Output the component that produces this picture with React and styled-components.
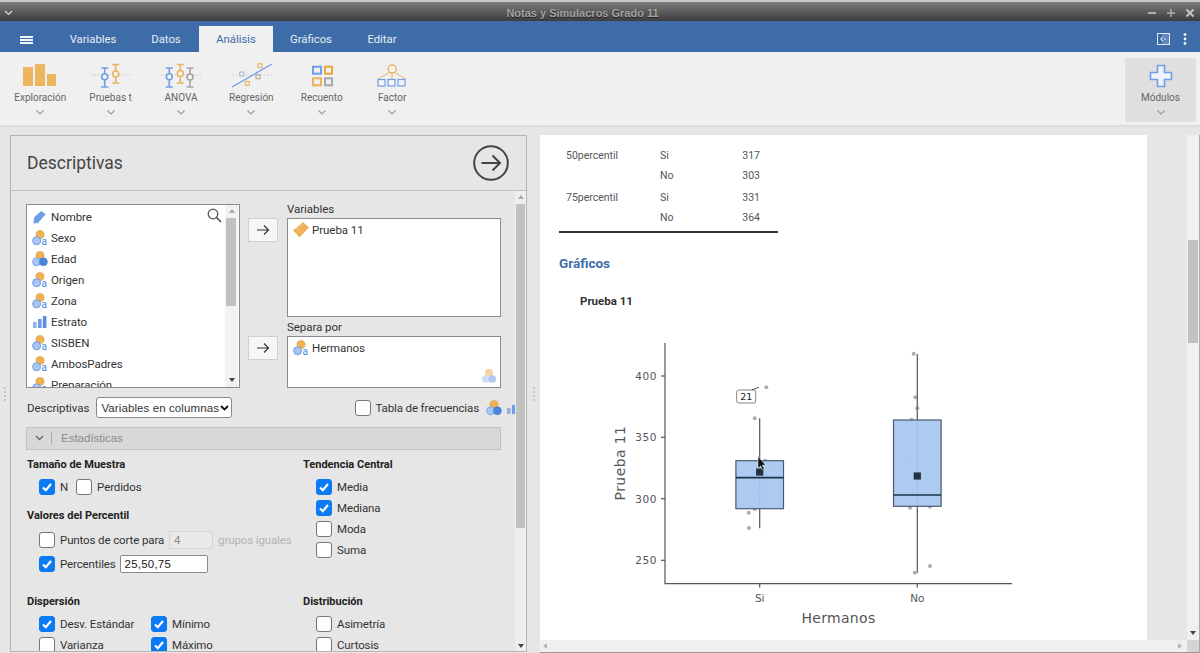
import React from 'react';
import styled, { createGlobalStyle } from 'styled-components';

const Global = createGlobalStyle`
  html, body { margin: 0; padding: 0; width: 1200px; height: 653px; overflow: hidden; background: #e6e6e6; }
  #root { width: 1200px; height: 653px; }
  * { box-sizing: border-box; }
`;

const Shell = styled.div`
  width: 1200px; height: 653px; display: flex; flex-direction: column; overflow: hidden;
  font-family: Roboto, "Liberation Sans", sans-serif; color: #333; background: #e6e6e6;
`;
const TitleBar = styled.header`
  height: 21px; flex: none; display: flex; align-items: center; justify-content: space-between; padding: 2px 4px 0 4px;
  background: linear-gradient(#7c7c7c, #3d3d3d); border-top: 2px solid #c9c9c9; color: #c4c4c4;
`;
const WindowTitle = styled.div`
  font: bold 11px "Liberation Sans", sans-serif; color: #a3a3a3; text-shadow: 0 1px 0 #222; padding-left: 6px;
`;
const WindowButtons = styled.div`display: flex; gap: 7px; align-items: center; padding-right: 0;`;
const TabBar = styled.nav`
  height: 31px; flex: none; background: #3e6ca8; display: flex; align-items: flex-end; position: relative;
`;
const Burger = styled.div`
  width: 13px; height: 8px; margin: 0 0 8px 20px; border-top: 2px solid #f2f5fa; border-bottom: 2px solid #f2f5fa; position: relative; flex: none;
  &::after { content: ""; position: absolute; left: 0; right: 0; top: 1px; height: 2px; background: #f2f5fa; }
`;
const Tabs = styled.div`display: flex; margin-left: 20px; height: 26px; align-items: stretch;`;
const Tab = styled.div`
  width: ${p => p.$w}px; display: flex; align-items: center; justify-content: center; font-size: 11.3px;
  color: ${p => p.$active ? '#3e6ca8' : '#e6ecf5'}; background: ${p => p.$active ? '#f0f0f0' : 'transparent'};
`;
const TabTools = styled.div`margin-left: auto; display: flex; align-items: center; gap: 13px; padding: 5px 13px 0 0; height: 100%;`;
const Ribbon = styled.div`
  height: 75px; flex: none; background: #f0f0f0; border-bottom: 2px solid #dcdcdc; display: flex; padding: 6px 4px 0 5px;
`;
const Module = styled.div`
  width: 70.4px; height: 64px; display: flex; flex-direction: column; align-items: center; font-size: 10px; color: #666;
  ${p => p.$active && 'background:#dfdfdf;border-radius:3px;width:71px;'}
  svg.mi { flex: none; margin-top: 2px; display: block; }
  span { margin-top: 2px; line-height: 12px; }
`;
const Chevron = styled.svg`margin-top: 6px; display: block;`;
const RibbonSpacer = styled.div`flex: 1;`;
const Workspace = styled.main`flex: 1; min-height: 0; display: flex; padding-top: 8px;`;
const Splitter = styled.div`
  width: ${p => p.$w}px; flex: none; display: flex; flex-direction: column; align-items: center; justify-content: center; gap: 2px;
  i { width: 2px; height: 2px; background: #bbb; border-radius: 50%; display: block; }
`;
const OptionsPanel = styled.section`
  width: 517px; flex: none; background: #e6e6e6; border: 1px solid #b5b5b5; display: flex; flex-direction: column; overflow: hidden; height: 517px;
`;
const PanelHead = styled.div`
  height: 55px; flex: none; border-bottom: 1px solid #c2c2c2; display: flex; align-items: center; justify-content: space-between; padding: 0 17px 0 16px;
`;
const PanelTitle = styled.h1`margin: 0; font-weight: 400; font-size: 17.5px; color: #444; padding-bottom: 1px;`;
const FormRow = styled.div`flex: 1; min-height: 0; display: flex;`;
const Form = styled.div`width: 504px; flex: none; overflow: hidden; padding: 13px 0 0 15px;`;
const VScroll = styled.div`
  flex: 1; background: #efefef; display: flex; flex-direction: column; align-items: center; justify-content: space-between; padding: 4px 0 3px; position: relative;
`;
const Thumb = styled.div`
  position: absolute; left: 1px; right: ${p => p.$r ?? 1}px; top: ${p => p.$top}px; height: ${p => p.$h}px; background: #c1c1c1;
`;
const Tri = styled.i`
  width: 0; height: 0; border-left: 3.5px solid transparent; border-right: 3.5px solid transparent;
  ${p => p.$down ? 'border-top: 4px solid #444;' : 'border-bottom: 4px solid #aaa;'}
  display: block;
`;
const Supplier = styled.div`display: grid; grid-template-columns: 214px 31px 214px; column-gap: 8px; width: 475px;`;
const SourceList = styled.div`
  height: 184px; border: 1px solid #8b8b8b; background: #fff; display: flex; overflow: hidden; position: relative;
`;
const SourceItems = styled.div`flex: 1; overflow: hidden; padding-top: 1px;`;
const VarItem = styled.div`
  height: 21px; display: flex; align-items: center; font-size: 11.5px; letter-spacing: -.05px; color: #333; padding-left: 5px; gap: 3px; flex: none;
  svg { flex: none; }
`;
const Search = styled.svg`position: absolute; right: 17px; top: 3px;`;
const ListScroll = styled.div`
  width: 13px; flex: none; background: #f2f2f2; display: flex; flex-direction: column; align-items: center; justify-content: space-between; padding: 4px 0 5px; position: relative; margin-right: 1px;
`;
const ButtonCol = styled.div`display: flex; flex-direction: column; padding-top: 14px; gap: 94px;`;
const MoveButton = styled.div`
  width: 30px; height: 24px; background: #f6f6f6; border: 1px solid #d0d0d0; display: flex; align-items: center; justify-content: center;
`;
const TargetCol = styled.div`display: flex; flex-direction: column;`;
const TargetLabel = styled.div`height: ${p => p.$h}px; font-size: 11.5px; letter-spacing: -.05px; color: #333; display: flex; align-items: flex-end; padding-bottom: 2px;`;
const TargetBox = styled.div`
  height: ${p => p.$h}px; border: 1px solid #8b8b8b; background: #fff; position: relative;
`;
const BoxHint = styled.svg`position: absolute; right: 3px; bottom: 3px; opacity: .55;`;
const OptionBar = styled.div`display: flex; align-items: center; margin-top: 9px; height: 21px; width: 510px; white-space: nowrap;`;
const OptionLabel = styled.span`font-size: 11.5px; letter-spacing: -.05px; color: #333; margin-left: 1px;`;
const Select = styled.div`
  margin-left: 7px; width: 136px; height: 21px; border: 1px solid #8b8b8b; border-radius: 3px; background: #fff; display: flex; align-items: center; justify-content: space-between;
  font: 11.5px "Liberation Sans", sans-serif; letter-spacing: .1px; color: #333; padding: 0 2px 0 4px; flex: none;
`;
const FreqGroup = styled.div`display: flex; align-items: center; gap: 4px; margin-left: 123px; font-size: 11.5px; letter-spacing: -.12px; white-space: nowrap; flex: none;`;
const FreqLabel = styled.span`margin: 0 3px 0 -5px;`;
const Band = styled.div`
  margin-top: 9px; height: 23px; width: 475px; background: #d8d8d8; border: 1px solid #c2c2c2; display: flex; align-items: center; padding: 0 0 1px 8px;
  font: 11.5px "Liberation Sans", sans-serif; color: #8a8a8a;
  b { width: 1px; height: 12px; background: #aaa; margin: 0 9px 0 7px; display: block; }
`;
const Columns = styled.div`display: grid; grid-template-columns: 276px 200px; margin-left: 1px;`;
const Stack = styled.div`display: flex; flex-direction: column;`;
const Heading = styled.div`
  height: 14px; line-height: 14px; margin-top: ${p => p.$top}px; font-weight: 700; font-size: 11px; color: #222; flex: none;
`;
const Line = styled.div`
  height: ${p => p.$h || 21}px; display: flex; align-items: center; margin-left: ${p => p.$ml || 12}px; font-size: 11.5px; letter-spacing: -.12px; color: #333; flex: none; margin-top: ${p => p.$top || 0}px;
`;
const Box = styled.span`
  width: 16px; height: 16px; flex: none; border-radius: 3px; margin-right: 5px; display: flex; align-items: center; justify-content: center;
  background: ${p => p.$on ? '#0b7bf5' : '#fff'}; border: 1px solid ${p => p.$on ? '#0b7bf5' : '#777'};
`;
const Cell = styled.span`display: flex; align-items: center; width: ${p => p.$w ? p.$w + 'px' : 'auto'}; margin-left: ${p => p.$ml || 0}px; flex: none;`;
const NumInput = styled.div`
  height: ${p => p.$h}px; width: ${p => p.$w}px; margin-left: ${p => p.$ml}px; border-radius: 2px; display: flex; align-items: center; padding-left: 4px;
  font: 11.5px "Liberation Sans", sans-serif; letter-spacing: .2px; flex: none;
  background: ${p => p.$off ? '#e9e9e9' : '#fff'}; color: ${p => p.$off ? '#888' : '#222'}; border: 1px solid ${p => p.$off ? '#d4d4d4' : '#8b8b8b'};
`;
const Muted = styled.span`color: #b3b3b3; margin-left: 5px; white-space: nowrap;`;
const ResultsPane = styled.section`flex: 1; min-width: 0; display: flex; flex-direction: column; height: 518px;`;
const ResultsMain = styled.div`flex: 1; min-height: 0; display: flex;`;
const Sheet = styled.div`width: 607px; flex: none; background: #fff; overflow: hidden; padding-top: 11px;`;
const Gutter = styled.div`width: 40px; flex: none; background: #e6e6e6;`;
const ResultScroll = styled.div`
  flex: 1; background: #f0f0f0; position: relative; display: flex; flex-direction: column; justify-content: flex-end; align-items: center; padding-bottom: 5px; border-right: 1px solid #aaa;
`;
const HScroll = styled.div`
  height: 13px; flex: none; background: #efefef; border-bottom: 1px solid #9a9a9a; border-right: 1px solid #aaa; display: flex; align-items: center; justify-content: space-between; padding-left: 3px;
`;
const HTri = styled.i`
  width: 0; height: 0; border-top: 3.5px solid transparent; border-bottom: 3.5px solid transparent; display: block;
  ${p => p.$right ? 'border-left: 4px solid #b5b5b5;' : 'border-right: 4px solid #b5b5b5;'}
`;
const Corner = styled.div`display: flex; align-items: center; gap: 5px; height: 100%; b { width: 12px; height: 100%; background: #d4d4d4; display: block; }`;
const TableBlock = styled.div`
  margin-left: 19px; width: 219px; border-bottom: 2px solid #333; padding-bottom: 3.5px;
`;
const TRow = styled.div`
  display: grid; grid-template-columns: 94px 54px 46px; height: 19.5px; align-items: center; padding-left: 7px; font-size: 10.5px; color: #555; margin-top: ${p => p.$top || 0}px;
  span:last-child { text-align: right; }
`;
const Section = styled.h2`margin: 21px 0 0 19px; font-size: 13.5px; line-height: 18px; font-weight: 700; color: #3e6ca8;`;
const PlotTitle = styled.h3`margin: 22px 0 0 40px; font-size: 11.5px; line-height: 14px; font-weight: 700; color: #333;`;
const PlotSvg = styled.svg`display: block; margin-top: 12.5px;`;

const B = '#6f9ee6', G = '#efb153';
const IconNomText = () => (
  <svg width="16" height="16" viewBox="0 0 16 16">
    <circle cx="8" cy="4.6" r="4.1" fill={G} stroke="#d99a3c" strokeWidth=".5" />
    <circle cx="4.6" cy="10.8" r="4" fill="#a9c6f2" stroke={B} strokeWidth="1" />
    <text x="9.6" y="15.3" fontSize="10" fontFamily="Roboto, sans-serif" fill="#4a86dc">a</text>
  </svg>
);
const IconNom = () => (
  <svg width="16" height="16" viewBox="0 0 16 16">
    <circle cx="8" cy="4.6" r="4.1" fill={G} stroke="#d99a3c" strokeWidth=".5" />
    <circle cx="4.6" cy="10.8" r="4" fill="#a9c6f2" stroke={B} strokeWidth=".8" />
    <circle cx="11.4" cy="10.8" r="4" fill="#4a86dc" stroke="#3a76cc" strokeWidth=".5" />
  </svg>
);
const IconOrd = () => (
  <svg width="16" height="16" viewBox="0 0 16 16">
    <rect x="1" y="8" width="3.6" height="6" fill="#8fb2ea" /><rect x="6" y="5" width="3.6" height="9" fill="#6f9ee6" /><rect x="10.8" y="2" width="3.6" height="12" fill="#5a8ede" />
  </svg>
);
const IconId = () => (
  <svg width="16" height="16" viewBox="0 0 16 16"><path d="M2.3 8 L9.3 2 L13.7 5.3 L5.7 14.3 L1.3 14.3 Z" fill="#6f9ee6" /></svg>
);
const IconRuler = () => (
  <svg width="16" height="16" viewBox="0 0 16 16">
    <path d="M.5 8.5 L10 .5 L15.5 5.5 L6.5 15 Z" fill="#efb153" stroke="#d99a3c" strokeWidth=".5" />
    <path d="M3.5 6.2 l1.6 1.6 M6 4 l1.6 1.6 M8.5 2 l1.6 1.6" stroke="#fbe2b5" strokeWidth=".8" />
  </svg>
);
const Arrow = () => (
  <svg width="14" height="12" viewBox="0 0 14 12" fill="none" stroke="#333" strokeWidth="1.2"><path d="M1 6 H12.5 M8 1.5 L12.5 6 L8 10.5" /></svg>
);
const Check = () => (
  <svg width="12" height="12" viewBox="0 0 12 12" fill="none" stroke="#fff" strokeWidth="2.2"><path d="M2 6.5 L4.8 9.2 L10 3" /></svg>
);
const Chk = ({ on }) => <Box $on={on}>{on && <Check />}</Box>;
const Down = ({ c = '#999' }) => (
  <Chevron width="8" height="5" viewBox="0 0 8 5" fill="none" stroke={c} strokeWidth="1.1"><path d="M.5 .5 L4 4 L7.5 .5" /></Chevron>
);
const Dots = ({ y1 = 15, x1 = 10, x2 = 50 }) => <path d={`M${x1} ${y1} H${x2}`} stroke="#c8c8c8" strokeWidth="1" strokeDasharray="1.5 2" />;
const Marker = ({ x, y1, y2, cy, c }) => (
  <g stroke={c} strokeWidth="1.6" fill="#f4f4f4">
    <path d={`M${x - 3.5} ${y1} H${x + 3.5} M${x} ${y1} V${y2} M${x - 3.5} ${y2} H${x + 3.5}`} fill="none" />
    <circle cx={x} cy={cy} r="3" />
  </g>
);
const IconBox = ({ children }) => <svg className="mi" width="60" height="30" viewBox="0 0 60 30">{children}</svg>;
const Sq = ({ x, y, c, s = 4 }) => <rect x={x - s / 2} y={y - s / 2} width={s} height={s} fill="none" stroke={c} strokeWidth="1.1" />;

const items = [
  ['Sexo', IconNomText], ['Edad', IconNom], ['Origen', IconNomText], ['Zona', IconNomText],
  ['Estrato', IconOrd], ['SISBEN', IconNomText], ['AmbosPadres', IconNomText], ['Preparación', IconNomText],
];
const siPts = [[766.3, 387.3], [754.7, 418.3], [765.3, 460.7], [773.3, 465], [757.7, 489.7], [754.7, 509], [748.7, 512.7], [749, 528]];
const noPts = [[913.7, 353.7], [915.3, 397.3], [917.3, 408.3], [911.7, 419.7], [908, 461.3], [910, 507.7], [930, 506.7], [914.7, 572.7], [930, 566]];

function BoxPlot({ x, top, bottom, median, mean, wTop, wBottom, pts }) {
  return (
    <g>
      <path d={`M${x} ${wTop} V${wBottom}`} stroke="#555" strokeWidth="1.2" />
      {pts.map(([a, b]) => <circle key={a + '-' + b} cx={a} cy={b} r="2" fill="#777" opacity=".6" />)}
      <rect x={x - 23.8} y={top} width="47.6" height={bottom - top} fill="#a9c8f0" fillOpacity=".95" stroke="#4a5a70" strokeWidth="1.2" />
      <path d={`M${x - 23.8} ${median} H${x + 23.8}`} stroke="#1f3348" strokeWidth="1.7" />
      <rect x={x - 3.6} y={mean - 3.6} width="7.2" height="7.2" fill="#22303d" />
    </g>
  );
}

export default function App() {
  return (
    <Shell>
      <Global />
      <TitleBar>
        <svg width="9" height="6" viewBox="0 0 9 6" fill="none" stroke="#ddd" strokeWidth="1.2"><path d="M1 1 L4.5 4.5 L8 1" /></svg>
        <WindowTitle>Notas y Simulacros Grado 11</WindowTitle>
        <WindowButtons>
          <svg width="12" height="10" viewBox="0 0 12 10" stroke="#c8c8c8" strokeWidth="1.6"><path d="M2 5 H10" /></svg>
          <svg width="12" height="10" viewBox="0 0 12 10" stroke="#b0b0b0" strokeWidth="1.4"><path d="M2 5 H10 M6 1 V9" /></svg>
          <svg width="12" height="10" viewBox="0 0 12 10" stroke="#c8c8c8" strokeWidth="1.8"><path d="M2.5 1.5 L9.5 8.5 M9.5 1.5 L2.5 8.5" /></svg>
        </WindowButtons>
      </TitleBar>
      <TabBar>
        <Burger />
        <Tabs>
          <Tab $w={80}>Variables</Tab>
          <Tab $w={66}>Datos</Tab>
          <Tab $w={74} $active>Análisis</Tab>
          <Tab $w={76}>Gráficos</Tab>
          <Tab $w={66}>Editar</Tab>
        </Tabs>
        <TabTools>
          <svg width="13" height="12" viewBox="0 0 13 12"><rect x=".5" y=".5" width="12" height="11" fill="#5f88bd" stroke="#dfe8f4" /><rect x="1" y="1" width="4" height="10" fill="#3e6ca8" /><path d="M6 4 L3.5 6 L6 8" fill="none" stroke="#fff" /><circle cx="8" cy="6" r=".7" fill="#fff" /></svg>
          <svg width="4" height="12" viewBox="0 0 4 12" fill="#fff"><circle cx="2" cy="1.6" r="1.4" /><circle cx="2" cy="6" r="1.4" /><circle cx="2" cy="10.4" r="1.4" /></svg>
        </TabTools>
      </TabBar>
      <Ribbon>
        <Module>
          <IconBox><g fill="#ecb55f"><rect x="13" y="7" width="10" height="19" /><rect x="25" y="4" width="10" height="22" /><rect x="37" y="14" width="9" height="12" /></g></IconBox>
          <span>Exploración</span><Down />
        </Module>
        <Module>
          <IconBox><Dots /><Marker x={23.7} y1={8} y2={27} cy={16.7} c="#6f9ee6" /><Marker x={34.7} y1={4.5} y2={23} cy={14} c="#e9b45f" /></IconBox>
          <span>Pruebas t</span><Down />
        </Module>
        <Module>
          <IconBox><Dots /><Marker x={18.3} y1={8} y2={27} cy={16.7} c="#6f9ee6" /><Marker x={29.3} y1={4.5} y2={23} cy={13.5} c="#e9b45f" /><Marker x={39} y1={8} y2={27} cy={17} c="#a6a6a6" /></IconBox>
          <span>ANOVA</span><Down />
        </Module>
        <Module>
          <IconBox>
            <Dots x1={11} x2={51} />
            <path d="M11 27 L51 4" stroke="#6f9ee6" strokeWidth="1.3" />
            <Sq x={39} y={5.7} c="#e9b45f" /><Sq x={37} y={16.7} c="#b5a98f" /><Sq x={20.7} y={14} c="#aab9cf" /><Sq x={26.3} y={23.3} c="#e9b45f" />
          </IconBox>
          <span>Regresión</span><Down />
        </Module>
        <Module>
          <IconBox>
            <g fill="none" strokeWidth="2">
              <rect x="21" y="6.7" width="8" height="7" stroke="#6f9ee6" />
              <rect x="33" y="6.7" width="7" height="7" stroke="#e9a83f" />
              <rect x="21" y="18.3" width="8" height="7" stroke="#e9b45f" />
              <rect x="33" y="18.3" width="7" height="7" stroke="#a8a8a8" />
            </g>
          </IconBox>
          <span>Recuento</span><Down />
        </Module>
        <Module>
          <IconBox>
            <path d="M30 11 L16 19 M30 11 V19 M30 11 L44 19" stroke="#e9b45f" strokeWidth="1" fill="none" />
            <circle cx="30.3" cy="9" r="4" fill="#f4f4f4" stroke="#e9b45f" strokeWidth="1.4" />
            <g fill="#f4f4f4" stroke="#6f9ee6" strokeWidth="1.2">
              <rect x="16" y="19.5" width="7" height="6.5" /><rect x="26" y="19.5" width="7" height="6.5" /><rect x="36" y="19.5" width="7" height="6.5" />
            </g>
          </IconBox>
          <span>Factor</span><Down />
        </Module>
        <RibbonSpacer />
        <Module $active>
          <IconBox><path d="M26.5 5.5 H33.5 V12.5 H40.5 V19.5 H33.5 V26.5 H26.5 V19.5 H19.5 V12.5 H26.5 Z" fill="#eef3fb" stroke="#6f9ee6" strokeWidth="1.6" /></IconBox>
          <span>Módulos</span><Down />
        </Module>
      </Ribbon>
      <Workspace>
        <Splitter $w={10}><i /><i /><i /><i /></Splitter>
        <OptionsPanel>
          <PanelHead>
            <PanelTitle>Descriptivas</PanelTitle>
            <svg width="36" height="36" viewBox="0 0 36 36" fill="none" stroke="#444" strokeWidth="2"><circle cx="18" cy="18" r="16.8" /><path d="M8.5 18 H27 M19.5 10.5 L27 18 L19.5 25.5" /></svg>
          </PanelHead>
          <FormRow>
            <Form>
              <Supplier>
                <SourceList>
                  <SourceItems>
                    <VarItem><IconId />Nombre</VarItem>
                    {items.map(([n, I]) => <VarItem key={n}><I />{n}</VarItem>)}
                  </SourceItems>
                  <Search width="15" height="15" viewBox="0 0 15 15" fill="none" stroke="#555" strokeWidth="1.3"><circle cx="6" cy="6" r="4.8" /><path d="M9.6 9.6 L14 14" strokeWidth="1.7" /></Search>
                  <ListScroll><Tri /><Thumb $top={13} $h={88} $r={2} /><Tri $down /></ListScroll>
                </SourceList>
                <ButtonCol>
                  <MoveButton><Arrow /></MoveButton>
                  <MoveButton><Arrow /></MoveButton>
                </ButtonCol>
                <TargetCol>
                  <TargetLabel $h={14}>Variables</TargetLabel>
                  <TargetBox $h={99}><VarItem><IconRuler />Prueba 11</VarItem></TargetBox>
                  <TargetLabel $h={19}>Separa por</TargetLabel>
                  <TargetBox $h={52}>
                    <VarItem><IconNomText />Hermanos</VarItem>
                    <BoxHint width="16" height="16" viewBox="0 0 16 16"><circle cx="8" cy="5" r="4" fill={G} /><circle cx="4.8" cy="11" r="3.8" fill="#a9c6f2" /><circle cx="11.2" cy="11" r="3.8" fill="#6f9ee6" /></BoxHint>
                  </TargetBox>
                </TargetCol>
              </Supplier>
              <OptionBar>
                <OptionLabel>Descriptivas</OptionLabel>
                <Select>Variables en columnas
                  <svg width="9" height="6" viewBox="0 0 9 6" fill="none" stroke="#111" strokeWidth="1.8"><path d="M1 1 L4.5 4.5 L8 1" /></svg>
                </Select>
                <FreqGroup>
                  <Box />
                  <FreqLabel>Tabla de frecuencias</FreqLabel>
                  <IconNom />
                  <IconOrd />
                </FreqGroup>
              </OptionBar>
              <Band>
                <svg width="9" height="6" viewBox="0 0 9 6" fill="none" stroke="#666" strokeWidth="1.3"><path d="M1 1 L4.5 4.5 L8 1" /></svg>
                <b />Estadísticas
              </Band>
              <Columns>
                <Stack>
                  <Heading $top={8}>Tamaño de Muestra</Heading>
                  <Line $top={4}><Cell><Chk on />N</Cell><Cell $ml={8}><Chk />Perdidos</Cell></Line>
                  <Heading $top={12}>Valores del Percentil</Heading>
                  <Line $top={6}><Chk />Puntos de corte para<NumInput $w={44} $h={18} $ml={5} $off>4</NumInput><Muted>grupos iguales</Muted></Line>
                  <Line $h={24} $top={2}><Chk on />Percentiles<NumInput $w={88} $h={18} $ml={4}>25,50,75</NumInput></Line>
                  <Heading $top={19}>Dispersión</Heading>
                  <Line $top={4}><Cell $w={112}><Chk on />Desv. Estándar</Cell><Cell><Chk on />Mínimo</Cell></Line>
                  <Line><Cell $w={112}><Chk />Varianza</Cell><Cell><Chk on />Máximo</Cell></Line>
                </Stack>
                <Stack>
                  <Heading $top={8}>Tendencia Central</Heading>
                  <Line $ml={13} $top={4}><Chk on />Media</Line>
                  <Line $ml={13}><Chk on />Mediana</Line>
                  <Line $ml={13}><Chk />Moda</Line>
                  <Line $ml={13}><Chk />Suma</Line>
                  <Heading $top={35}>Distribución</Heading>
                  <Line $ml={13} $top={4}><Chk />Asimetría</Line>
                  <Line $ml={13}><Chk />Curtosis</Line>
                </Stack>
              </Columns>
            </Form>
            <VScroll><Tri /><Thumb $top={13} $h={324} /><Tri $down /></VScroll>
          </FormRow>
        </OptionsPanel>
        <Splitter $w={13}><i /><i /><i /><i /></Splitter>
        <ResultsPane>
          <ResultsMain>
            <Sheet>
              <TableBlock>
                <TRow><span>50percentil</span><span>Si</span><span>317</span></TRow>
                <TRow><span /><span>No</span><span>303</span></TRow>
                <TRow $top={3}><span>75percentil</span><span>Si</span><span>331</span></TRow>
                <TRow><span /><span>No</span><span>364</span></TRow>
              </TableBlock>
              <Section>Gráficos</Section>
              <PlotTitle>Prueba 11</PlotTitle>
              <PlotSvg width="607" height="320" viewBox="540 320 607 320" fontFamily="'DejaVu Sans', sans-serif">
                <path d="M665 343 V583.7 H1012" fill="none" stroke="#555" strokeWidth="1.2" />
                {[[376, '400'], [437.3, '350'], [498.7, '300'], [560.3, '250']].map(([y, t]) => (
                  <g key={t}>
                    <path d={`M661 ${y} H665`} stroke="#555" strokeWidth="1.2" />
                    <text x="657" y={y + 4} textAnchor="end" fontSize="10.5" letterSpacing=".6" fill="#555">{t}</text>
                  </g>
                ))}
                <path d="M759.7 584 V587.5 M917.3 584 V587.5" stroke="#555" strokeWidth="1.2" />
                <text x="759.7" y="601.5" textAnchor="middle" fontSize="10.5" fill="#555">Si</text>
                <text x="917.3" y="601.5" textAnchor="middle" fontSize="10.5" fill="#555">No</text>
                <text x="838.5" y="623" textAnchor="middle" fontSize="14" letterSpacing=".3" fill="#555">Hermanos</text>
                <text transform="translate(625 463) rotate(-90)" textAnchor="middle" fontSize="14" letterSpacing=".4" fill="#555">Prueba 11</text>
                <BoxPlot x={759.7} top={460.7} bottom={508.7} median={477.7} mean={472} wTop={418.3} wBottom={528.3} pts={siPts} />
                <BoxPlot x={917.3} top={420} bottom={506.3} median={495} mean={476} wTop={354} wBottom={572.7} pts={noPts} />
                <rect x="736.7" y="390" width="19" height="13" rx="2" fill="#fff" stroke="#666" strokeWidth=".8" />
                <text x="746.2" y="400.3" textAnchor="middle" fontSize="9.5" fill="#222">21</text>
                <path d="M751.7 390 L759 387.3" stroke="#444" strokeWidth=".9" />
                <path d="M758 456.5 V468.5 L760.6 466 L762.6 470 L764.4 469 L762.4 465.2 L765.6 465 Z" fill="#111" stroke="#fff" strokeWidth=".5" />
              </PlotSvg>
            </Sheet>
            <Gutter />
            <ResultScroll>
              <Thumb $top={105} $h={103} $r={1} />
              <Tri $down />
            </ResultScroll>
          </ResultsMain>
          <HScroll><HTri /><Corner><HTri $right /><b /></Corner></HScroll>
        </ResultsPane>
      </Workspace>
    </Shell>
  );
}
